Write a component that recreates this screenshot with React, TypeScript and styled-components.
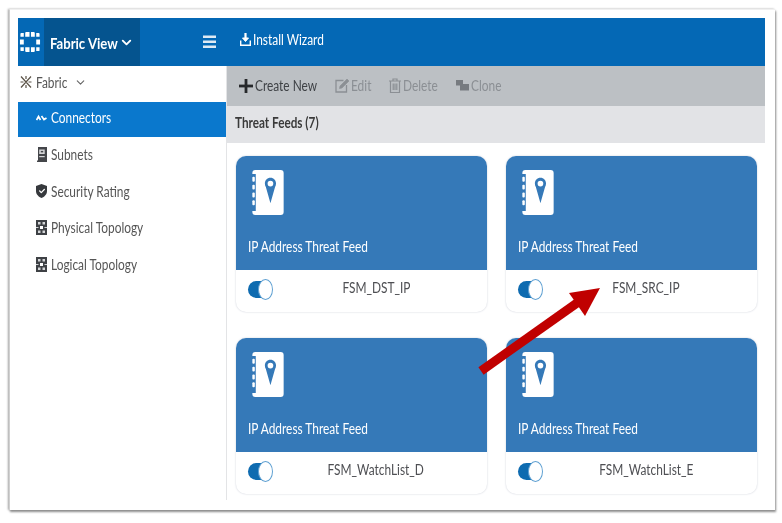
import React from "react";
import styled, { createGlobalStyle } from "styled-components";
import { FiChevronDown } from "react-icons/fi";
import { FaCheck } from "react-icons/fa";

const GlobalStyle = createGlobalStyle`
  html, body {
    margin: 0;
    padding: 0;
    background: #fff;
  }
  body {
    font-family: Lato, "Liberation Sans", sans-serif;
  }
`;

const PageStyled = styled.div`
  position: relative;
  width: 782px;
  height: 523px;
  padding: 9px 7px 13px 9px;
  box-sizing: border-box;
  overflow: hidden;
  filter: blur(0.45px);
`;

const FrameStyled = styled.div`
  width: 100%;
  height: 100%;
  box-sizing: border-box;
  padding: 8px 10px 10px 8px;
  background: #fff;
  border-left: 1px solid #d0d0d0;
  border-top: 1px solid #f0f0f0;
  box-shadow: 1px 2px 2px #8f8f8f, -1px 0 2px #a8a8a8;
  display: flex;
  flex-direction: column;
`;

/* the screenshot is squeezed sideways, so the text is too */
const LabelStyled = styled.span<{ $w?: number; $center?: boolean }>`
  display: inline-block;
  white-space: nowrap;
  transform: scaleX(0.82);
  transform-origin: ${(p) => (p.$center ? "center" : "left")};
  ${(p) => (p.$w ? `width: ${p.$w}px;` : "")}
`;

const HeaderStyled = styled.header`
  height: 48px;
  flex: none;
  display: flex;
  align-items: stretch;
  background: #0468b5;
  color: #fff;
`;

const LogoCellStyled = styled.div`
  width: 26px;
  display: flex;
  align-items: center;
  padding-left: 1px;
  box-sizing: border-box;
`;

const ViewSwitchStyled = styled.div`
  width: 96px;
  display: flex;
  align-items: center;
  gap: 2px;
  padding-left: 6px;
  box-sizing: border-box;
  background: #05548f;
  font-size: 16px;
  font-weight: 700;
  svg {
    font-size: 15px;
    stroke-width: 3;
  }
`;

const BurgerCellStyled = styled.div`
  width: 86px;
  display: flex;
  align-items: center;
  justify-content: flex-end;
  padding-right: 10px;
  box-sizing: border-box;
`;

const WizardStyled = styled.div`
  display: flex;
  align-items: center;
  gap: 2px;
  margin-left: 14px;
  font-size: 14.5px;
  padding-bottom: 5px;
`;

const BodyStyled = styled.div`
  flex: 1;
  display: flex;
  min-height: 0;
`;

const SidebarStyled = styled.nav`
  width: 209px;
  flex: none;
  box-sizing: border-box;
  border-right: 1px solid #e3e4e6;
  display: flex;
  flex-direction: column;
`;

const FabricRowStyled = styled.div`
  height: 36px;
  box-sizing: border-box;
  padding: 0 0 4px 2px;
  display: flex;
  align-items: center;
  gap: 4px;
  font-size: 14.5px;
  color: #555;
  svg.chev {
    margin-left: 6px;
    font-size: 13px;
    color: #666;
  }
`;

const NavItemStyled = styled.div<{ $active?: boolean }>`
  height: ${(p) => (p.$active ? "35px" : "36.7px")};
  box-sizing: border-box;
  padding: 0 0 4px 18px;
  display: flex;
  align-items: center;
  gap: 4px;
  font-size: 14.5px;
  color: ${(p) => (p.$active ? "#fff" : "#555")};
  background: ${(p) => (p.$active ? "#0a78cd" : "transparent")};
  margin-bottom: ${(p) => (p.$active ? "1px" : "0")};
`;

const NavIconBoxStyled = styled.span`
  position: relative;
  width: 11px;
  height: 14px;
  display: inline-flex;
  align-items: center;
  justify-content: center;
  flex: none;
  svg.shield {
    position: absolute;
    inset: 0;
  }
  svg.check {
    position: relative;
    font-size: 6px;
    color: #fff;
  }
`;

const ContentStyled = styled.main`
  flex: 1;
  min-width: 0;
  display: flex;
  flex-direction: column;
`;

const ToolbarStyled = styled.div`
  height: 40px;
  flex: none;
  box-sizing: border-box;
  display: flex;
  align-items: center;
  padding: 0 0 1px 12px;
  background: #bcc0c4;
`;

const ToolButtonStyled = styled.div<{ $disabled?: boolean }>`
  display: flex;
  align-items: center;
  gap: 2px;
  margin-right: 19px;
  font-size: 14.5px;
  color: ${(p) => (p.$disabled ? "#8b8f94" : "#3f4246")};
`;

const SectionBarStyled = styled.div`
  height: 37px;
  flex: none;
  display: flex;
  align-items: center;
  padding-left: 8px;
  padding-bottom: 4px;
  box-sizing: border-box;
  background: #e2e3e6;
  font-size: 14.3px;
  font-weight: 700;
  color: #3a3a3a;
`;

const CardGridStyled = styled.div`
  display: grid;
  grid-template-columns: 251px 251px;
  grid-auto-rows: 155.5px;
  column-gap: 19px;
  row-gap: 26.5px;
  padding: 13px 0 0 9px;
`;

const CardStyled = styled.div`
  display: flex;
  flex-direction: column;
  border-radius: 10px;
  overflow: hidden;
  background: #fff;
  box-shadow: 0 0 2px #c9ccd6;
`;

const CardTopStyled = styled.div`
  height: 114px;
  flex: none;
  display: flex;
  flex-direction: column;
  justify-content: space-between;
  box-sizing: border-box;
  padding: 14px 12px 15px;
  background: #3579b8;
  color: #fff;
  font-size: 14.5px;
  svg {
    margin-left: 4px;
  }
`;

const CardBottomStyled = styled.div`
  flex: 1;
  display: flex;
  align-items: center;
  padding: 0 0 2px 12px;
  font-size: 14.5px;
  color: #4e4f53;
`;

const ToggleStyled = styled.span`
  position: relative;
  width: 24px;
  height: 17px;
  flex: none;
  box-sizing: border-box;
  border-radius: 9px;
  background: #0e6bb0;
  &::after {
    content: "";
    position: absolute;
    top: -2px;
    right: -1px;
    width: 15px;
    height: 21px;
    box-sizing: border-box;
    border-radius: 50%;
    background: #fff;
    border: 1.5px solid #5fa0d2;
  }
`;

const FeedNameStyled = styled.span`
  flex: 1;
  text-align: center;
  padding-right: 7px;
  margin-bottom: 5px;
`;

const ArrowStyled = styled.svg`
  position: absolute;
  left: 470px;
  top: 280px;
  pointer-events: none;
`;

const FortinetLogo = () => (
  <svg width="22" height="22" viewBox="0 0 22 23" fill="#fff">
    <path d="M7 1h3.500v5H6V2a1 1 0 0 1 1-1zM12 1h3a1 1 0 0 1 1 1v4h-4zM1 3a1 1 0 0 1 1-1h2.500v4H1zM17.500 2H20a1 1 0 0 1 1 1v3h-3.500z" />
    <path d="M0.500 9H4.500v5H0.500zM17.500 9h4v5h-4z" />
    <path d="M1 17h3.500v4H2a1 1 0 0 1-1-1zM6 17h4.500v5H7a1 1 0 0 1-1-1zM12 17h4v4a1 1 0 0 1-1 1h-3zM17.500 17H21v3a1 1 0 0 1-1 1h-2.500z" />
  </svg>
);

const BurgerIcon = () => (
  <svg width="13" height="14" viewBox="0 0 13 14" fill="#dfeaf4">
    <rect y="0.500" width="13" height="2.500" />
    <rect y="5.500" width="13" height="2.500" />
    <rect y="10.500" width="13" height="2.500" />
  </svg>
);

const InstallIcon = () => (
  <svg width="11" height="13" viewBox="0 0 11 13" fill="none" stroke="#fff">
    <path d="M5.500 0v6.500" strokeWidth="2.200" />
    <path d="M2.500 5l3 3.500 3-3.500z" fill="#fff" strokeWidth="1" />
    <path d="M.7 7.500v4.800h9.600V7.500" strokeWidth="1.400" />
  </svg>
);

const FabricIcon = () => (
  <svg width="12" height="14" viewBox="0 0 12 14" stroke="#5a5246" strokeWidth="1.200">
    <path d="M1 1.500l10 11M11 1.500L1 12.500M6 1v3M6 10v3M.5 7h3M8.500 7h3" />
  </svg>
);

const ConnectorsIcon = () => (
  <svg width="11" height="8" viewBox="0 0 11 8" fill="none" stroke="#fff" strokeWidth="1.700">
    <path d="M.5 6l2-3.500 2 3.500M5.500 2l2.500 3.500 2.500-1.500" />
  </svg>
);

const SubnetsIcon = () => (
  <svg width="10" height="15" viewBox="0 0 10 15">
    <path d="M1 0h9v15H0v-1.500h1z" fill="#44464a" />
    <rect x="2.200" y="2.500" width="5.500" height="4.500" fill="#d5d6d8" />
    <rect x="3.800" y="3.900" width="2.400" height="1.500" fill="#44464a" />
    <rect x="2.200" y="9" width="5.500" height="1.200" fill="#d5d6d8" />
  </svg>
);

const ShieldShape = () => (
  <svg className="shield" width="11" height="14" viewBox="0 0 11 14" fill="#36393d">
    <path d="M5.500 0L11 2v5c0 3.500-2.700 5.800-5.500 7C2.700 12.800 0 10.500 0 7V2z" />
  </svg>
);

const TopologyIcon = () => (
  <svg width="11" height="15" viewBox="0 0 11 15">
    <rect width="11" height="15" fill="#3e4145" />
    <path d="M2 2h2.500v2.500H2zM6.500 2H9v2.500H6.500zM2 10.500h2.500V13H2zM6.500 10.500H9V13H6.500z" fill="#d4d6d8" />
    <path d="M4 6h3v3H4z" fill="#fff" />
    <path d="M0 7h2.500v1H0zM8.500 7H11v1H8.500z" fill="#d4d6d8" />
  </svg>
);

const PlusIcon = () => (
  <svg width="14" height="14" viewBox="0 0 14 14" fill="#26282b">
    <rect x="5.600" y="0" width="2.800" height="14" />
    <rect x="0" y="5.600" width="14" height="2.800" />
  </svg>
);

const EditIcon = () => (
  <svg width="14" height="15" viewBox="0 0 14 15" fill="none" stroke="#8b8f94" strokeWidth="1.300">
    <path d="M8.500 2.500H1v11.500h10.500V7" />
    <path d="M4.500 10.500l.5-2.500 7-7 2 2-7 7z" fill="#8b8f94" strokeWidth="0.600" />
  </svg>
);

const TrashIcon = () => (
  <svg width="12" height="15" viewBox="0 0 12 15" fill="none" stroke="#8b8f94" strokeWidth="1.200">
    <path d="M0 3h12M4 3V1h4v2M1.500 3v11.500h9V3M4.200 5.500v6.500M6 5.500v6.500M7.800 5.500v6.500" />
  </svg>
);

const CloneIcon = () => (
  <svg width="13" height="11" viewBox="0 0 13 11" fill="#777b80">
    <rect x="0" y="0" width="7" height="5.500" />
    <rect x="4" y="4" width="9" height="6.500" />
  </svg>
);

const AddressBookIcon = () => (
  <svg width="32" height="45" viewBox="0 0 32 46">
    <path
      fill="#fff"
      d="M0 3a3 3 0 0 1 3-3h26a3 3 0 0 1 3 3v40a3 3 0 0 1-3 3H3a3 3 0 0 1-3-3v-1h3.500V4H0z"
    />
    <rect x="0" y="7" width="2.500" height="5" rx="1" fill="#fff" />
    <rect x="0" y="15" width="2.500" height="5" rx="1" fill="#fff" />
    <rect x="0" y="23" width="2.500" height="5" rx="1" fill="#fff" />
    <rect x="0" y="31" width="2.500" height="5" rx="1" fill="#fff" />
    <path
      fill="#3579b8"
      fillRule="evenodd"
      d="M18.500 8c-3.400 0-5.700 2.600-5.700 5.800 0 1.400.4 2.600 1 3.700L18.500 34l4.700-16.500c.6-1.100 1-2.300 1-3.700 0-3.200-2.300-5.800-5.700-5.800zm0 3a2.900 2.900 0 1 1 0 5.800 2.900 2.900 0 0 1 0-5.800z"
    />
  </svg>
);

const feeds = ["FSM_DST_IP", "FSM_SRC_IP", "FSM_WatchList_D", "FSM_WatchList_E"];

const App = () => (
  <>
    <GlobalStyle />
    <PageStyled>
      <FrameStyled>
        <HeaderStyled>
          <LogoCellStyled>
            <FortinetLogo />
          </LogoCellStyled>
          <ViewSwitchStyled>
            <LabelStyled $w={67}>Fabric View</LabelStyled>
            <FiChevronDown />
          </ViewSwitchStyled>
          <BurgerCellStyled>
            <BurgerIcon />
          </BurgerCellStyled>
          <WizardStyled>
            <InstallIcon />
            <LabelStyled>Install Wizard</LabelStyled>
          </WizardStyled>
        </HeaderStyled>
        <BodyStyled>
          <SidebarStyled>
            <FabricRowStyled>
              <FabricIcon />
              <LabelStyled $w={28}>Fabric</LabelStyled>
              <FiChevronDown className="chev" />
            </FabricRowStyled>
            <NavItemStyled $active>
              <NavIconBoxStyled>
                <ConnectorsIcon />
              </NavIconBoxStyled>
              <LabelStyled>Connectors</LabelStyled>
            </NavItemStyled>
            <NavItemStyled>
              <NavIconBoxStyled>
                <SubnetsIcon />
              </NavIconBoxStyled>
              <LabelStyled>Subnets</LabelStyled>
            </NavItemStyled>
            <NavItemStyled>
              <NavIconBoxStyled>
                <ShieldShape />
                <FaCheck className="check" />
              </NavIconBoxStyled>
              <LabelStyled>Security Rating</LabelStyled>
            </NavItemStyled>
            <NavItemStyled>
              <NavIconBoxStyled>
                <TopologyIcon />
              </NavIconBoxStyled>
              <LabelStyled>Physical Topology</LabelStyled>
            </NavItemStyled>
            <NavItemStyled>
              <NavIconBoxStyled>
                <TopologyIcon />
              </NavIconBoxStyled>
              <LabelStyled>Logical Topology</LabelStyled>
            </NavItemStyled>
          </SidebarStyled>
          <ContentStyled>
            <ToolbarStyled>
              <ToolButtonStyled>
                <PlusIcon />
                <LabelStyled $w={61}>Create New</LabelStyled>
              </ToolButtonStyled>
              <ToolButtonStyled $disabled>
                <EditIcon />
                <LabelStyled $w={19}>Edit</LabelStyled>
              </ToolButtonStyled>
              <ToolButtonStyled $disabled>
                <TrashIcon />
                <LabelStyled $w={34}>Delete</LabelStyled>
              </ToolButtonStyled>
              <ToolButtonStyled $disabled>
                <CloneIcon />
                <LabelStyled $w={30}>Clone</LabelStyled>
              </ToolButtonStyled>
            </ToolbarStyled>
            <SectionBarStyled>
              <LabelStyled>Threat Feeds (7)</LabelStyled>
            </SectionBarStyled>
            <CardGridStyled>
              {feeds.map((name) => (
                <CardStyled key={name}>
                  <CardTopStyled>
                    <AddressBookIcon />
                    <LabelStyled>IP Address Threat Feed</LabelStyled>
                  </CardTopStyled>
                  <CardBottomStyled>
                    <ToggleStyled />
                    <FeedNameStyled>
                      <LabelStyled $center>{name}</LabelStyled>
                    </FeedNameStyled>
                  </CardBottomStyled>
                </CardStyled>
              ))}
            </CardGridStyled>
          </ContentStyled>
        </BodyStyled>
      </FrameStyled>
      <ArrowStyled width="130" height="100" viewBox="0 0 130 100">
        <path d="M11 91L107 23" stroke="#c00000" strokeWidth="9" />
        <path d="M130 8L99 13 115 36z" fill="#c00000" />
      </ArrowStyled>
    </PageStyled>
  </>
);

export default App;
